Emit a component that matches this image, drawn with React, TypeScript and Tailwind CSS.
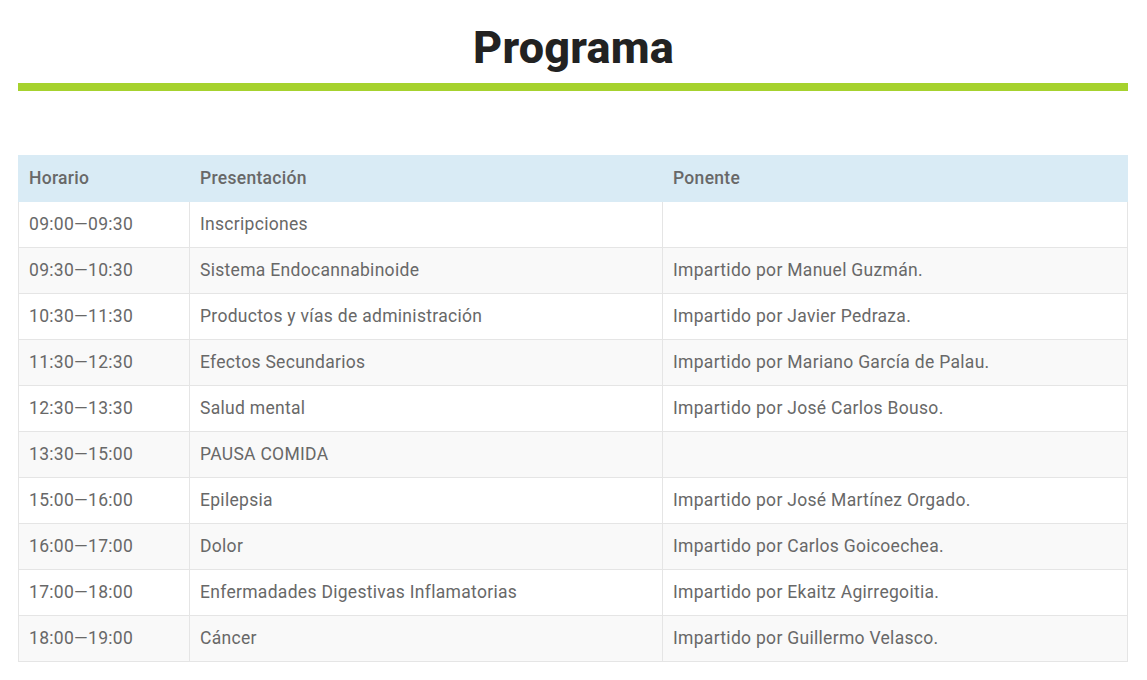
const rows: [string, string, string][] = [
  ["09:00—09:30", "Inscripciones", ""],
  ["09:30—10:30", "Sistema Endocannabinoide", "Impartido por Manuel Guzmán."],
  ["10:30—11:30", "Productos y vías de administración", "Impartido por Javier Pedraza."],
  ["11:30—12:30", "Efectos Secundarios", "Impartido por Mariano García de Palau."],
  ["12:30—13:30", "Salud mental", "Impartido por José Carlos Bouso."],
  ["13:30—15:00", "PAUSA COMIDA", ""],
  ["15:00—16:00", "Epilepsia", "Impartido por José Martínez Orgado."],
  ["16:00—17:00", "Dolor", "Impartido por Carlos Goicoechea."],
  ["17:00—18:00", "Enfermadades Digestivas Inflamatorias", "Impartido por Ekaitz Agirregoitia."],
  ["18:00—19:00", "Cáncer", "Impartido por Guillermo Velasco."],
];

export default function App() {
  return (
    <div className="min-h-screen bg-white px-[18px] pt-[22px] font-['Roboto',sans-serif]">
      <h1 className="text-center text-[45px] font-extrabold leading-[52px] text-[#222] tracking-[0.2px]">
        Programa
      </h1>
      <div className="mt-[9px] h-2 w-[1110px] bg-[#a6d22e]" />
      <table className="mt-[64px] w-[1110px] border-collapse text-[17.5px] tracking-[0.3px] text-[#686868]">
        <thead>
          <tr className="h-[46px] bg-[#d9ebf5]">
            <th className="w-[171px] border border-[#d9ebf5] px-[10px] text-left font-medium">Horario</th>
            <th className="w-[473px] border border-[#d9ebf5] px-[10px] text-left font-medium">Presentación</th>
            <th className="border border-[#d9ebf5] px-[10px] text-left font-medium">Ponente</th>
          </tr>
        </thead>
        <tbody>
          {rows.map((r, i) => (
            <tr key={i} className={i % 2 === 0 ? "h-[46px] bg-white" : "h-[46px] bg-[#f9f9f9]"}>
              <td className="border border-[#e5e5e5] px-[10px]">{r[0]}</td>
              <td className="border border-[#e5e5e5] px-[10px]">{r[1]}</td>
              <td className="border border-[#e5e5e5] px-[10px]">{r[2]}</td>
            </tr>
          ))}
        </tbody>
      </table>
    </div>
  );
}
